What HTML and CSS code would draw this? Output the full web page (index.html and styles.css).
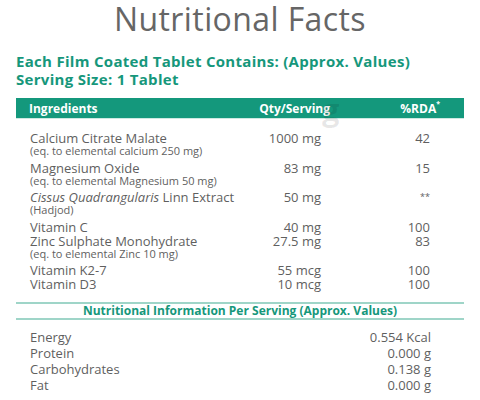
FILE: index.html
```html
<!DOCTYPE html>
<html lang="en">
<head>
    <meta charset="UTF-8" />
    <title>Nutritional Facts</title>
    <meta name="viewport" content="width=device-width, initial-scale=1" />
    <link rel="stylesheet" href="styles.css">
</head>
<body>
    <h1>Nutritional Facts</h1>

    <div class="intro">
        Each Film Coated Tablet Contains: (Approx. Values)<br />
        Serving Size: 1 Tablet
    </div>

    <div class="head-bar">
        <span>Ingredients</span>
        <span class="qty">Qty/Serving</span>
        <span class="rda">%RDA<sup>*</sup></span>
        <span class="mark">g</span>
    </div>

    <div class="ingredients">
        <div class="item">
            <div class="name">Calcium Citrate Malate</div>
            <div class="qty">1000 mg</div>
            <div class="rda">42</div>
            <div class="note">(eq. to elemental calcium 250 mg)</div>
        </div>
        <div class="item">
            <div class="name">Magnesium Oxide</div>
            <div class="qty">83 mg</div>
            <div class="rda">15</div>
            <div class="note">(eq. to elemental Magnesium 50 mg)</div>
        </div>
        <div class="item">
            <div class="name"><em>Cissus Quadrangularis</em> Linn Extract</div>
            <div class="qty">50 mg</div>
            <div class="rda small">**</div>
            <div class="note">(Hadjod)</div>
        </div>
        <div class="item">
            <div class="name">Vitamin C</div>
            <div class="qty">40 mg</div>
            <div class="rda">100</div>
        </div>
        <div class="item">
            <div class="name">Zinc Sulphate Monohydrate</div>
            <div class="qty">27.5 mg</div>
            <div class="rda">83</div>
            <div class="note">(eq. to elemental Zinc 10 mg)</div>
        </div>
        <div class="item">
            <div class="name">Vitamin K2-7</div>
            <div class="qty">55 mcg</div>
            <div class="rda">100</div>
        </div>
        <div class="item">
            <div class="name">Vitamin D3</div>
            <div class="qty">10 mcg</div>
            <div class="rda">100</div>
        </div>
    </div>

    <div class="sub-head">Nutritional Information Per Serving (Approx. Values)</div>

    <div class="nutrition">
        <div class="line"><span>Energy</span><span>0.554 Kcal</span></div>
        <div class="line"><span>Protein</span><span>0.000 g</span></div>
        <div class="line"><span>Carbohydrates</span><span>0.138 g</span></div>
        <div class="line"><span>Fat</span><span>0.000 g</span></div>
    </div>
</body>
</html>
```

FILE: styles.css
```css
body {
    font-family: "Open Sans", Arial, sans-serif;
    margin: 0;
    padding: 0 16px;
    background-color: #fff;
    color: #5f5f5f;
}
h1 {
    margin: 0;
    text-align: center;
    font-weight: 400;
    font-size: 32px;
    letter-spacing: 0.4px;
    line-height: 38px;
    color: #666;
}
.intro {
    margin-top: 14px;
    font-size: 15px;
    letter-spacing: 0.3px;
    line-height: 18px;
    font-weight: 700;
    color: #16977b;
}
.head-bar {
    position: relative;
    margin-top: 10px;
    display: grid;
    grid-template-columns: 1fr 110px 110px;
    align-items: center;
    height: 20px;
    padding: 0 24px 0 13px;
    background-color: #14987c;
    color: #fff;
    font-size: 12px;
    font-weight: 700;
    box-shadow: 0 1px 0 #cde9e2;
}
.head-bar .qty,
.head-bar .rda {
    text-align: right;
}
.head-bar sup {
    font-size: 7px;
    vertical-align: top;
    line-height: 1;
}
.head-bar .mark {
    position: absolute;
    left: 306px;
    top: -10px;
    font-size: 31px;
    font-weight: 700;
    color: rgba(0, 0, 0, 0.09);
}
.ingredients {
    padding: 13px 34px 0 14px;
}
.item {
    display: grid;
    grid-template-columns: 1fr 76px 109px;
}
.item .name,
.item .qty,
.item .rda {
    font-size: 13px;
    line-height: 14px;
}
.item .qty,
.item .rda {
    text-align: right;
}
.item .rda.small {
    font-size: 9px;
}
.item .note {
    grid-column: 1 / -1;
    font-size: 11px;
    line-height: 12px;
    margin-bottom: 3.5px;
}
.sub-head {
    margin-top: 11px;
    border-top: 2px solid #9fd5c8;
    border-bottom: 2px solid #9fd5c8;
    text-align: center;
    font-size: 12px;
    font-weight: 700;
    line-height: 14px;
    color: #16977b;
}
.nutrition {
    padding: 9px 33px 0 14px;
}
.line {
    display: flex;
    justify-content: space-between;
    font-size: 13px;
    line-height: 16px;
}
```
